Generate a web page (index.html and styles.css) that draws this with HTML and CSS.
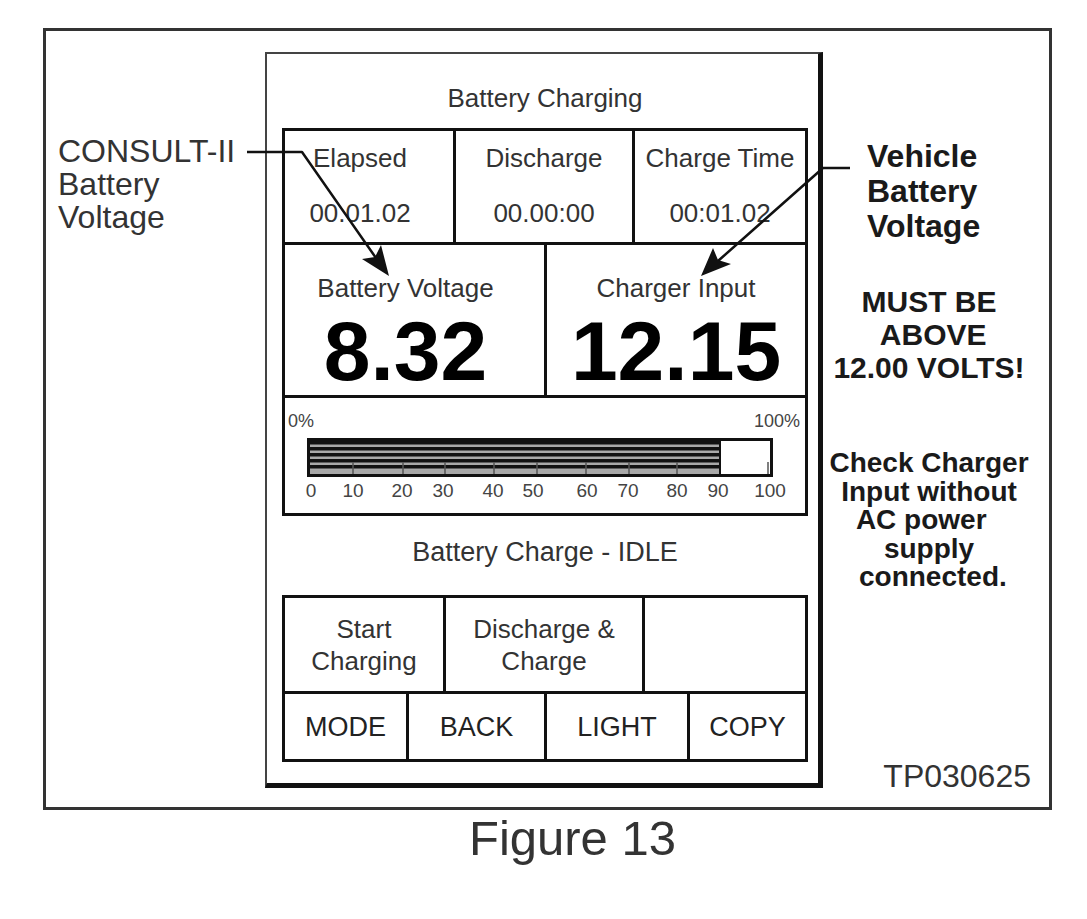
FILE: index.html
```html
<!DOCTYPE html>
<html lang="en">
<head>
  <meta charset="UTF-8" />
  <meta name="viewport" content="width=device-width, initial-scale=1" />
  <title>Figure 13</title>
  <link rel="stylesheet" href="styles.css">
</head>
<body>

  <div class="figure">
    <div class="frame">

      <div class="note-left">CONSULT-II<br>Battery<br>Voltage</div>

      <div class="device">
        <div class="title">Battery Charging</div>

        <div class="panel">
          <div class="times">
            <div class="cell first"><span>Elapsed</span><span>00.01.02</span></div>
            <div class="cell"><span>Discharge</span><span>00.00:00</span></div>
            <div class="cell"><span>Charge Time</span><span>00:01.02</span></div>
          </div>

          <div class="volts">
            <div class="cell first"><span>Battery Voltage</span><span class="big">8.32</span></div>
            <div class="cell"><span>Charger Input</span><span class="big">12.15</span></div>
          </div>

          <div class="gauge">
            <svg width="520" height="115" viewBox="0 0 520 115">
              <text class="pct" x="3" y="29">0%</text>
              <text class="pct" x="515" y="29" text-anchor="end">100%</text>

              <rect x="23.5" y="41.5" width="463" height="36" fill="#fff" stroke="#111" stroke-width="3"/>
              <rect x="25" y="43" width="410" height="33" fill="#a8a8a8"/>
              <rect x="25" y="43" width="410" height="3.5" fill="#111"/>
              <rect x="25" y="49" width="410" height="3.5" fill="#111"/>
              <rect x="25" y="55" width="410" height="3.5" fill="#111"/>
              <rect x="25" y="61" width="410" height="3.5" fill="#111"/>
              <rect x="25" y="67" width="410" height="3.5" fill="#111"/>
              <line x1="435" y1="43" x2="435" y2="76" stroke="#111" stroke-width="2"/>

              <g stroke="#555" stroke-width="1.5">
                <line x1="68" y1="64" x2="68" y2="76"/>
                <line x1="118" y1="64" x2="118" y2="76"/>
                <line x1="160" y1="64" x2="160" y2="76"/>
                <line x1="209" y1="64" x2="209" y2="76"/>
                <line x1="252" y1="64" x2="252" y2="76"/>
                <line x1="301" y1="64" x2="301" y2="76"/>
                <line x1="344" y1="64" x2="344" y2="76"/>
                <line x1="392" y1="64" x2="392" y2="76"/>
                <line x1="483" y1="64" x2="483" y2="76"/>
              </g>

              <g class="scale" text-anchor="middle">
                <text x="26" y="99">0</text>
                <text x="68" y="99">10</text>
                <text x="117" y="99">20</text>
                <text x="158" y="99">30</text>
                <text x="208" y="99">40</text>
                <text x="248" y="99">50</text>
                <text x="302" y="99">60</text>
                <text x="343" y="99">70</text>
                <text x="392" y="99">80</text>
                <text x="433" y="99">90</text>
                <text x="485" y="99">100</text>
              </g>
            </svg>
          </div>
        </div>

        <div class="status">Battery Charge - IDLE</div>

        <div class="buttons">
          <div class="btn-row top">
            <div class="btn">Start<br>Charging</div>
            <div class="btn">Discharge &amp;<br>Charge</div>
            <div class="btn"></div>
          </div>
          <div class="btn-row bottom">
            <div class="btn">MODE</div>
            <div class="btn">BACK</div>
            <div class="btn">LIGHT</div>
            <div class="btn">COPY</div>
          </div>
        </div>
      </div>

      <div class="note-right">
        <div class="callout">Vehicle<br>Battery<br>Voltage</div>
        <div class="warn">MUST BE<br>&nbsp;ABOVE<br>12.00 VOLTS!</div>
        <div class="hint">Check Charger<br>Input without<br>AC power&nbsp;&nbsp;<br>supply<br>&nbsp;connected.</div>
        <div class="code">TP030625</div>
      </div>

      <!-- callout arrows, drawn in page coordinates -->
      <svg class="arrows" viewBox="43 28 1009 782">
        <g fill="none" stroke="#111" stroke-width="2.5" stroke-linejoin="round">
          <polyline points="247,152 302,152 376,258"/>
          <polyline points="850,168 823,168 718,261"/>
        </g>
        <g fill="#111">
          <polygon points="389,276 362,259 375,257 381,245"/>
          <polygon points="701,276 713,248 718,260 731,264"/>
        </g>
      </svg>
    </div>

    <div class="caption">Figure 13</div>
  </div>

</body>
</html>
```

FILE: styles.css
```css
body {
  margin: 0;
  background: #fff;
  font-family: "Liberation Sans", Arial, sans-serif;
  color: #333;
}
.figure {
  padding: 28px 0 0 43px;
}
.frame {
  position: relative;
  display: flex;
  width: 1009px;
  height: 782px;
  box-sizing: border-box;
  border: 3px solid #333;
}

/* left annotation */
.note-left {
  width: 219px;
  box-sizing: border-box;
  padding: 104px 0 0 12px;
  font-size: 32px;
  line-height: 33px;
}

/* the charger screen */
.device {
  margin-top: 21px;
  width: 558px;
  height: 736px;
  box-sizing: border-box;
  border-style: solid;
  border-width: 2px 5px 5px 2px;
  border-color: #444 #111 #111 #444;
  padding: 0 10px 0 15px;
}
.title {
  margin: 29px 0 15px;
  font-size: 26px;
  line-height: 30px;
  text-align: center;
}
.panel {
  border: 3px solid #111;
}
.times,
.volts {
  display: grid;
  box-sizing: border-box;
  border-bottom: 3px solid #111;
}
.times {
  grid-template-columns: 171px 179px 1fr;
  height: 114px;
}
.volts {
  grid-template-columns: 262px 1fr;
  height: 153px;
}
.cell {
  display: flex;
  flex-direction: column;
  align-items: center;
  border-right: 3px solid #111;
  font-size: 26px;
  line-height: 30px;
}
.cell:last-child {
  border-right: 0;
}
.cell.first {
  padding-right: 18px;
}
.times .cell {
  padding-top: 12px;
  gap: 25px;
}
.volts .cell {
  padding-top: 28px;
}
.big {
  margin-top: 6px;
  font-size: 84px;
  line-height: 84px;
  font-weight: 700;
  color: #000;
}
.gauge {
  height: 115px;
}
.gauge svg {
  display: block;
}
.pct {
  font-size: 18px;
  fill: #444;
}
.scale {
  font-size: 19px;
  fill: #444;
}
.status {
  margin: 21px 0 28px;
  font-size: 27px;
  line-height: 30px;
  text-align: center;
}
.buttons {
  border: 3px solid #111;
}
.btn-row {
  display: grid;
  box-sizing: border-box;
}
.btn-row.top {
  grid-template-columns: 161px 199px 1fr;
  height: 96px;
  border-bottom: 3px solid #111;
}
.btn-row.bottom {
  grid-template-columns: 124px 138px 143px 1fr;
  height: 65px;
}
.btn {
  display: flex;
  align-items: center;
  justify-content: center;
  text-align: center;
  border-right: 3px solid #111;
  font-size: 26px;
  line-height: 32px;
}
.btn:last-child {
  border-right: 0;
}
.btn-row.bottom .btn {
  font-size: 27px;
  color: #222;
}

/* right annotations */
.note-right {
  flex: 1;
  display: flex;
  flex-direction: column;
  font-weight: 700;
  color: #1a1a1a;
}
.callout {
  margin: 108px 0 0 44px;
  font-size: 32px;
  line-height: 35px;
}
.warn {
  margin-top: 41px;
  padding-right: 14px;
  text-align: center;
  font-size: 30px;
  line-height: 33px;
}
.hint {
  margin-top: 65px;
  padding-right: 14px;
  text-align: center;
  font-size: 28px;
  line-height: 28.5px;
}
.code {
  margin-top: auto;
  align-self: flex-end;
  padding: 0 18px 13px 0;
  font-size: 32px;
  line-height: 35px;
  font-weight: 400;
  color: #333;
}

.arrows {
  position: absolute;
  left: -3px;
  top: -3px;
  width: 1009px;
  height: 782px;
  pointer-events: none;
}

.caption {
  width: 1009px;
  box-sizing: border-box;
  padding-left: 50px;
  text-align: center;
  font-size: 49px;
  line-height: 56px;
}
```
